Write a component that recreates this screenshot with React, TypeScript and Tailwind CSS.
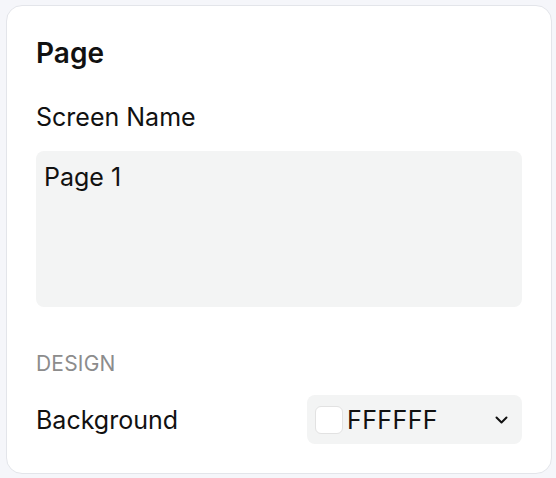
import React from "react";

export default function App() {
  return (
    <div
      className="w-[556px] h-[478px] bg-[#f5f6fa] pt-[5px] pl-[6px]"
      style={{ fontFamily: "Inter, 'Noto Sans', sans-serif" }}
    >
      <div className="w-[546px] h-[469px] bg-white border border-[#e3e5ea] rounded-[16px] px-[29px] pt-[30px] flex flex-col">
        <div className="text-[28px] leading-[34px] font-semibold text-[#111]">Page</div>
        <div className="mt-[32px] text-[25px] leading-[30px] text-[#111]">Screen Name</div>
        <div className="mt-[19px] h-[156px] rounded-[8px] bg-[#f3f4f4] pl-[8px] pt-[11px] text-[25px] leading-[30px] text-[#111]">
          Page 1
        </div>
        <div className="mt-[45px] text-[21px] leading-[24px] text-[#8c8c8c] tracking-[0.2px]">DESIGN</div>
        <div className="mt-[19px] flex items-center justify-between">
          <div className="text-[25px] leading-[30px] text-[#111]">Background</div>
          <div className="w-[215px] h-[49px] rounded-[8px] bg-[#f3f4f4] flex items-center pl-[8px] pr-[14px]">
            <div className="w-[28px] h-[28px] rounded-[6px] bg-white border border-[#e2e2e2]" />
            <div className="ml-[4px] text-[25px] leading-[30px] tracking-[0.4px] text-[#111]">FFFFFF</div>
            <svg className="ml-auto" width="13" height="8" viewBox="0 0 13 8" fill="none">
              <polyline points="1.5,1.5 6.5,6.5 11.5,1.5" stroke="#111" strokeWidth="2" strokeLinecap="round" strokeLinejoin="round" />
            </svg>
          </div>
        </div>
      </div>
    </div>
  );
}
